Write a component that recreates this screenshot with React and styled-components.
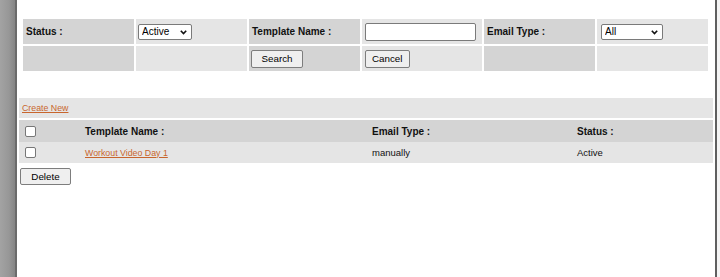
import React, { useState } from "react";
import styled, { createGlobalStyle } from "styled-components";

const GlobalStyle = createGlobalStyle`
    html, body {
        margin: 0;
        padding: 0;
        background-color: #ffffff;
    }
    body {
        font-family: "Liberation Sans", Arial, sans-serif;
        color: #000;
    }
`;

const Frame = styled.div`
    display: flex;
    width: 720px;
    height: 277px;
    overflow: hidden;
`;

const Gutter = styled.div`
    width: 15px;
    flex-shrink: 0;
    background: linear-gradient(to right, #a3a3a3 0%, #979797 60%, #858585 100%);
    border-right: 2px solid #6b6b6b;
`;

const RightEdge = styled.div`
    width: 3px;
    flex-shrink: 0;
    border-left: 2px solid #5f5f5f;
    background-color: #f4f4f4;
`;

const Page = styled.div`
    flex: 1;
    background-color: #ffffff;
    padding-top: 17px;
`;

const SearchGrid = styled.div`
    display: grid;
    grid-template-columns: 111px 111px 111px 120px 111px 111px;
    grid-auto-rows: 25px;
    gap: 2px;
    padding: 2px;
    margin-left: 4px;
    width: max-content;
`;

const Cell = styled.div`
    display: flex;
    align-items: center;
    padding: 0 ${(p) => (p.$pad ? p.$pad : 3)}px;
    background-color: ${(p) => (p.$dark ? "#d4d4d4" : "#e5e5e5")};
    font-size: 10px;
    font-weight: ${(p) => (p.$bold ? "bold" : "normal")};
    color: #111;
`;

const SelectWrap = styled.div`
    position: relative;
    display: inline-block;
    width: ${(p) => p.$width}px;
    height: 16px;
`;

const Select = styled.select`
    appearance: none;
    -webkit-appearance: none;
    width: 100%;
    height: 100%;
    box-sizing: border-box;
    margin: 0;
    padding: 0 0 0 3px;
    border: 1px solid #7a7a7a;
    border-radius: 2px;
    background-color: #fff;
    font-family: "Liberation Sans", Arial, sans-serif;
    font-size: 10px;
    color: #000;
    outline: none;
`;

const Chevron = styled.svg`
    position: absolute;
    right: 5px;
    top: 6px;
    pointer-events: none;
`;

const TextInput = styled.input`
    width: 111px;
    height: 18px;
    box-sizing: border-box;
    margin: 0;
    border: 1px solid #7a7a7a;
    border-radius: 2px;
    background-color: #fff;
    outline: none;
`;

const Button = styled.button`
    height: ${(p) => (p.$h ? p.$h : 18)}px;
    width: ${(p) => (p.$w ? `${p.$w}px` : "auto")};
    box-sizing: border-box;
    margin: 0;
    padding: 0 6px;
    border: 1px solid #7d7d7d;
    border-radius: 2px;
    background-color: #efefef;
    font-family: "Liberation Sans", Arial, sans-serif;
    font-size: 9.8px;
    color: #000;
    cursor: pointer;
`;

const ListSection = styled.div`
    margin: 25px 2px 0 2px;
    display: flex;
    flex-direction: column;
`;

const ActionBar = styled.div`
    height: 20px;
    display: flex;
    align-items: center;
    padding-left: 3px;
    margin-bottom: 2px;
    background-color: #e5e5e5;
`;

const OrangeLink = styled.a`
    font-size: 8.8px;
    color: #c8652d;
    text-decoration: underline;
    cursor: pointer;
`;

const ListRow = styled.div`
    display: grid;
    grid-template-columns: 63px 287px 205px 1fr;
    height: ${(p) => (p.$head ? 22 : 21)}px;
    align-items: center;
    background-color: ${(p) => (p.$head ? "#d4d4d4" : "#e5e5e5")};
    font-size: ${(p) => (p.$head ? "10px" : "9.5px")};
    font-weight: ${(p) => (p.$head ? "bold" : "normal")};
    color: #111;
`;

const ListCell = styled.div`
    padding-left: 3px;
    display: flex;
    align-items: center;
`;

const CheckCell = styled.div`
    padding-left: 6px;
    display: flex;
    align-items: center;
`;

const Check = styled.input`
    appearance: none;
    -webkit-appearance: none;
    margin: 0;
    width: 11px;
    height: 11px;
    box-sizing: border-box;
    border: 1px solid #777;
    border-radius: 2px;
    background-color: #fff;
`;

const DeleteRow = styled.div`
    margin-top: 3px;
    padding-left: 1px;
`;

const ChevronIcon = () => (
    <Chevron width="7" height="5" viewBox="0 0 7 5">
        <path d="M0.8 0.8 L3.5 3.6 L6.2 0.8" fill="none" stroke="#111" strokeWidth="1.6" />
    </Chevron>
);

const App = () => {
    const [templates] = useState([
        { name: "Workout Video Day 1", type: "manually", status: "Active" },
    ]);

    return (
        <>
            <GlobalStyle />
            <Frame>
                <Gutter />
                <Page>
                    <SearchGrid>
                        <Cell $dark $bold>Status :</Cell>
                        <Cell $pad={2}>
                            <SelectWrap $width={54}>
                                <Select defaultValue="Active">
                                    <option>Active</option>
                                    <option>Inactive</option>
                                </Select>
                                <ChevronIcon />
                            </SelectWrap>
                        </Cell>
                        <Cell $dark $bold>Template Name :</Cell>
                        <Cell>
                            <TextInput type="text" />
                        </Cell>
                        <Cell $dark $bold>Email Type :</Cell>
                        <Cell $pad={4}>
                            <SelectWrap $width={62}>
                                <Select defaultValue="All">
                                    <option>All</option>
                                    <option>manually</option>
                                </Select>
                                <ChevronIcon />
                            </SelectWrap>
                        </Cell>

                        <Cell $dark />
                        <Cell />
                        <Cell $dark $pad={2}>
                            <Button $w={52}>Search</Button>
                        </Cell>
                        <Cell>
                            <Button>Cancel</Button>
                        </Cell>
                        <Cell $dark />
                        <Cell />
                    </SearchGrid>

                    <ListSection>
                        <ActionBar>
                            <OrangeLink>Create New</OrangeLink>
                        </ActionBar>
                        <ListRow $head>
                            <CheckCell><Check type="checkbox" /></CheckCell>
                            <ListCell>Template Name :</ListCell>
                            <ListCell>Email Type :</ListCell>
                            <ListCell>Status :</ListCell>
                        </ListRow>
                        {templates.map((t) => (
                            <ListRow key={t.name}>
                                <CheckCell><Check type="checkbox" /></CheckCell>
                                <ListCell><OrangeLink>{t.name}</OrangeLink></ListCell>
                                <ListCell>{t.type}</ListCell>
                                <ListCell>{t.status}</ListCell>
                            </ListRow>
                        ))}
                        <DeleteRow>
                            <Button $w={51} $h={17}>Delete</Button>
                        </DeleteRow>
                    </ListSection>
                </Page>
                <RightEdge />
            </Frame>
        </>
    );
};

export default App;
